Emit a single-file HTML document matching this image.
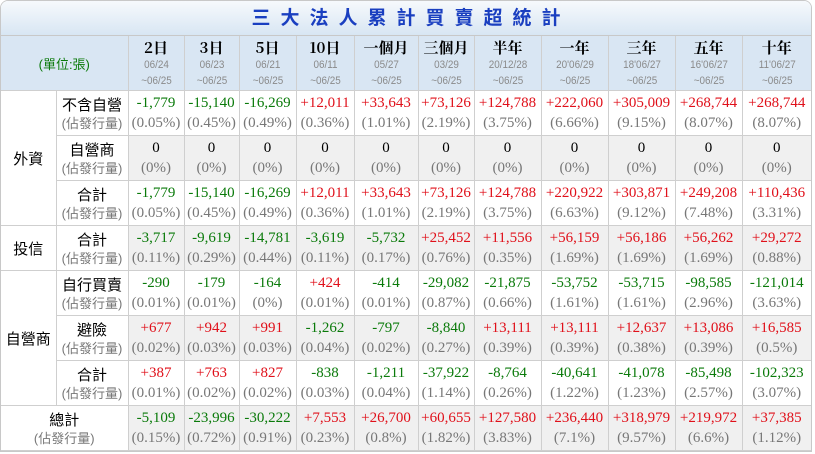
<!DOCTYPE html>
<html><head><meta charset="utf-8"><style>
body{margin:0;background:#fff;width:815px;height:454px;overflow:hidden;font-family:"Liberation Serif","Noto Serif CJK SC",serif}
.wrap{position:absolute;left:0;top:0;width:810px;height:450px;border:1px solid #c8c8c8;border-radius:8px 8px 0 0;overflow:hidden}
.title{height:34px;background:linear-gradient(#f6f9fc,#d8e6f3);border-bottom:1px solid #c8c8c8;text-align:center;font:bold 19px "Liberation Sans","Noto Sans CJK TC",sans-serif;color:#1a3fc0;letter-spacing:10px;line-height:36px;padding-left:10px}
table{border-collapse:collapse;table-layout:fixed;width:810px}
td{border:1px solid #cfcfcf;text-align:center;padding:0;height:44px;font-size:15px;line-height:20px}
tr:first-child td{border-top:none}
td:first-child{border-left:none}
td:last-child{border-right:none}
tr.h td{background:#d9e6f3;height:54px}
.h b{display:block;font:bold 15px "Noto Serif CJK TC","Liberation Serif",serif;color:#000;line-height:19px}
.h span{display:block;font-size:11px;color:#8a8a8a;line-height:16px;font-family:"Liberation Sans",sans-serif;transform:scaleX(.9)}
.unit{color:#0a7a0a;font:13px "Liberation Sans","Noto Sans CJK TC",sans-serif}
.L{font:15px "Liberation Sans","Noto Sans CJK TC",sans-serif;color:#000;background:#fff}
.L small{display:block;font-size:13px;color:#777;line-height:18px}
.g{color:#0a7a0a}.r{color:#e0101a}.k{color:#000}
.p{display:block;color:#777}
tr.s td.d{background:#f0f0f0}
</style></head><body><div class="wrap">
<div class="title">三大法人累計買賣超統計</div>
<table>
<colgroup><col style="width:55px"><col style="width:72px"><col style="width:56px"><col style="width:55px"><col style="width:57px"><col style="width:58px"><col style="width:64px"><col style="width:56px"><col style="width:67px"><col style="width:67px"><col style="width:67px"><col style="width:67px"><col style="width:69px"></colgroup>
<tr class="h"><td colspan="2" class="unit">(單位:張)</td>
<td><b>2日</b><span>06/24</span><span>~06/25</span></td>
<td><b>3日</b><span>06/23</span><span>~06/25</span></td>
<td><b>5日</b><span>06/21</span><span>~06/25</span></td>
<td><b>10日</b><span>06/11</span><span>~06/25</span></td>
<td><b>一個月</b><span>05/27</span><span>~06/25</span></td>
<td><b>三個月</b><span>03/29</span><span>~06/25</span></td>
<td><b>半年</b><span>20/12/28</span><span>~06/25</span></td>
<td><b>一年</b><span>20'06/29</span><span>~06/25</span></td>
<td><b>三年</b><span>18'06/27</span><span>~06/25</span></td>
<td><b>五年</b><span>16'06/27</span><span>~06/25</span></td>
<td><b>十年</b><span>11'06/27</span><span>~06/25</span></td></tr>
<tr><td rowspan="3" class="L">外資</td><td class="L">不含自營<small>(佔發行量)</small></td>
<td class="d"><span class="g">-1,779</span><span class="p">(0.05%)</span></td><td class="d"><span class="g">-15,140</span><span class="p">(0.45%)</span></td><td class="d"><span class="g">-16,269</span><span class="p">(0.49%)</span></td><td class="d"><span class="r">+12,011</span><span class="p">(0.36%)</span></td><td class="d"><span class="r">+33,643</span><span class="p">(1.01%)</span></td><td class="d"><span class="r">+73,126</span><span class="p">(2.19%)</span></td><td class="d"><span class="r">+124,788</span><span class="p">(3.75%)</span></td><td class="d"><span class="r">+222,060</span><span class="p">(6.66%)</span></td><td class="d"><span class="r">+305,009</span><span class="p">(9.15%)</span></td><td class="d"><span class="r">+268,744</span><span class="p">(8.07%)</span></td><td class="d"><span class="r">+268,744</span><span class="p">(8.07%)</span></td></tr>
<tr class="s"><td class="L">自營商<small>(佔發行量)</small></td>
<td class="d"><span class="k">0</span><span class="p">(0%)</span></td><td class="d"><span class="k">0</span><span class="p">(0%)</span></td><td class="d"><span class="k">0</span><span class="p">(0%)</span></td><td class="d"><span class="k">0</span><span class="p">(0%)</span></td><td class="d"><span class="k">0</span><span class="p">(0%)</span></td><td class="d"><span class="k">0</span><span class="p">(0%)</span></td><td class="d"><span class="k">0</span><span class="p">(0%)</span></td><td class="d"><span class="k">0</span><span class="p">(0%)</span></td><td class="d"><span class="k">0</span><span class="p">(0%)</span></td><td class="d"><span class="k">0</span><span class="p">(0%)</span></td><td class="d"><span class="k">0</span><span class="p">(0%)</span></td></tr>
<tr><td class="L">合計<small>(佔發行量)</small></td>
<td class="d"><span class="g">-1,779</span><span class="p">(0.05%)</span></td><td class="d"><span class="g">-15,140</span><span class="p">(0.45%)</span></td><td class="d"><span class="g">-16,269</span><span class="p">(0.49%)</span></td><td class="d"><span class="r">+12,011</span><span class="p">(0.36%)</span></td><td class="d"><span class="r">+33,643</span><span class="p">(1.01%)</span></td><td class="d"><span class="r">+73,126</span><span class="p">(2.19%)</span></td><td class="d"><span class="r">+124,788</span><span class="p">(3.75%)</span></td><td class="d"><span class="r">+220,922</span><span class="p">(6.63%)</span></td><td class="d"><span class="r">+303,871</span><span class="p">(9.12%)</span></td><td class="d"><span class="r">+249,208</span><span class="p">(7.48%)</span></td><td class="d"><span class="r">+110,436</span><span class="p">(3.31%)</span></td></tr>
<tr class="s"><td class="L">投信</td><td class="L">合計<small>(佔發行量)</small></td>
<td class="d"><span class="g">-3,717</span><span class="p">(0.11%)</span></td><td class="d"><span class="g">-9,619</span><span class="p">(0.29%)</span></td><td class="d"><span class="g">-14,781</span><span class="p">(0.44%)</span></td><td class="d"><span class="g">-3,619</span><span class="p">(0.11%)</span></td><td class="d"><span class="g">-5,732</span><span class="p">(0.17%)</span></td><td class="d"><span class="r">+25,452</span><span class="p">(0.76%)</span></td><td class="d"><span class="r">+11,556</span><span class="p">(0.35%)</span></td><td class="d"><span class="r">+56,159</span><span class="p">(1.69%)</span></td><td class="d"><span class="r">+56,186</span><span class="p">(1.69%)</span></td><td class="d"><span class="r">+56,262</span><span class="p">(1.69%)</span></td><td class="d"><span class="r">+29,272</span><span class="p">(0.88%)</span></td></tr>
<tr><td rowspan="3" class="L">自營商</td><td class="L">自行買賣<small>(佔發行量)</small></td>
<td class="d"><span class="g">-290</span><span class="p">(0.01%)</span></td><td class="d"><span class="g">-179</span><span class="p">(0.01%)</span></td><td class="d"><span class="g">-164</span><span class="p">(0%)</span></td><td class="d"><span class="r">+424</span><span class="p">(0.01%)</span></td><td class="d"><span class="g">-414</span><span class="p">(0.01%)</span></td><td class="d"><span class="g">-29,082</span><span class="p">(0.87%)</span></td><td class="d"><span class="g">-21,875</span><span class="p">(0.66%)</span></td><td class="d"><span class="g">-53,752</span><span class="p">(1.61%)</span></td><td class="d"><span class="g">-53,715</span><span class="p">(1.61%)</span></td><td class="d"><span class="g">-98,585</span><span class="p">(2.96%)</span></td><td class="d"><span class="g">-121,014</span><span class="p">(3.63%)</span></td></tr>
<tr class="s"><td class="L">避險<small>(佔發行量)</small></td>
<td class="d"><span class="r">+677</span><span class="p">(0.02%)</span></td><td class="d"><span class="r">+942</span><span class="p">(0.03%)</span></td><td class="d"><span class="r">+991</span><span class="p">(0.03%)</span></td><td class="d"><span class="g">-1,262</span><span class="p">(0.04%)</span></td><td class="d"><span class="g">-797</span><span class="p">(0.02%)</span></td><td class="d"><span class="g">-8,840</span><span class="p">(0.27%)</span></td><td class="d"><span class="r">+13,111</span><span class="p">(0.39%)</span></td><td class="d"><span class="r">+13,111</span><span class="p">(0.39%)</span></td><td class="d"><span class="r">+12,637</span><span class="p">(0.38%)</span></td><td class="d"><span class="r">+13,086</span><span class="p">(0.39%)</span></td><td class="d"><span class="r">+16,585</span><span class="p">(0.5%)</span></td></tr>
<tr><td class="L">合計<small>(佔發行量)</small></td>
<td class="d"><span class="r">+387</span><span class="p">(0.01%)</span></td><td class="d"><span class="r">+763</span><span class="p">(0.02%)</span></td><td class="d"><span class="r">+827</span><span class="p">(0.02%)</span></td><td class="d"><span class="g">-838</span><span class="p">(0.03%)</span></td><td class="d"><span class="g">-1,211</span><span class="p">(0.04%)</span></td><td class="d"><span class="g">-37,922</span><span class="p">(1.14%)</span></td><td class="d"><span class="g">-8,764</span><span class="p">(0.26%)</span></td><td class="d"><span class="g">-40,641</span><span class="p">(1.22%)</span></td><td class="d"><span class="g">-41,078</span><span class="p">(1.23%)</span></td><td class="d"><span class="g">-85,498</span><span class="p">(2.57%)</span></td><td class="d"><span class="g">-102,323</span><span class="p">(3.07%)</span></td></tr>
<tr class="s"><td colspan="2" class="L">總計<small>(佔發行量)</small></td>
<td class="d"><span class="g">-5,109</span><span class="p">(0.15%)</span></td><td class="d"><span class="g">-23,996</span><span class="p">(0.72%)</span></td><td class="d"><span class="g">-30,222</span><span class="p">(0.91%)</span></td><td class="d"><span class="r">+7,553</span><span class="p">(0.23%)</span></td><td class="d"><span class="r">+26,700</span><span class="p">(0.8%)</span></td><td class="d"><span class="r">+60,655</span><span class="p">(1.82%)</span></td><td class="d"><span class="r">+127,580</span><span class="p">(3.83%)</span></td><td class="d"><span class="r">+236,440</span><span class="p">(7.1%)</span></td><td class="d"><span class="r">+318,979</span><span class="p">(9.57%)</span></td><td class="d"><span class="r">+219,972</span><span class="p">(6.6%)</span></td><td class="d"><span class="r">+37,385</span><span class="p">(1.12%)</span></td></tr>
</table></div></body></html>
